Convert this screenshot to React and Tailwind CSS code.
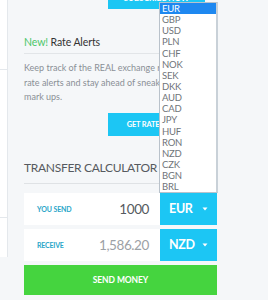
import React from 'react';

const currencies = ['EUR', 'GBP', 'USD', 'PLN', 'CHF', 'NOK', 'SEK', 'DKK', 'AUD', 'CAD', 'JPY', 'HUF', 'RON', 'NZD', 'CZK', 'BGN', 'BRL'];

function Caret() {
    return (
        <svg width="6" height="4" viewBox="0 0 6 4" className="ml-auto">
            <path d="M0.5 0.5 L5.5 0.5 L3 3.5 Z" fill="#ffffff" />
        </svg>
    );
}

function App() {
    return (
        <div className="relative w-[268px] h-[300px] overflow-hidden bg-[#f5f7f9] flex font-['Lato','Noto_Sans',sans-serif]">
            {/* colonna sinistra */}
            <div className="w-[8px] h-[257px] bg-white border-r border-[#e4e8ec] flex flex-col shrink-0">
                <div className="h-[70px] border-b border-[#e4e8ec]"></div>
                <div className="h-[148px] border-b border-[#e4e8ec]"></div>
            </div>

            <div className="flex-1 pl-[16px] flex flex-col">
                {/* bottone in alto, tagliato */}
                <div className="ml-[84px] w-[97px] h-[9px] bg-[#1cc6f4] overflow-hidden flex items-end justify-center">
                    <span className="text-[8px] font-bold text-white leading-none -translate-y-[7px]">SUBSCRIBE NOW</span>
                </div>

                <div className="w-[193px]">
                    <h3 className="mt-[26px] text-[10.5px] leading-[14px] text-[#333] tracking-[-0.1px]">
                        <span className="text-[#4cc76a]">New!</span> Rate Alerts
                    </h3>
                    <div className="mt-[4px] h-px bg-[#e2e5e8]"></div>
                    <p className="mt-[7px] text-[9px] leading-[14.5px] text-[#8a8f96] whitespace-nowrap">
                        Keep track of the REAL exchange rate with<br />
                        rate alerts and stay ahead of sneaky<br />
                        mark ups.
                    </p>
                    <button className="mt-[8.5px] ml-[84px] w-[97px] h-[23px] bg-[#1cc6f4] text-white text-[7.5px] font-bold tracking-[-0.2px] flex items-center justify-center">
                        GET RATE ALERTS
                    </button>

                    <h2 className="mt-[24px] text-[12px] leading-[16px] text-[#555a60] tracking-[-0.3px]">TRANSFER CALCULATOR</h2>
                    <div className="mt-[7px] h-px bg-[#dfe2e5]"></div>

                    {/* calcolatore */}
                    <div className="mt-[9px] flex flex-col gap-[4px]">
                        <div className="flex h-[32px]">
                            <div className="flex-1 bg-white flex items-center pl-[13px] pr-[11px]">
                                <span className="text-[7px] font-bold text-[#2ba6c9] tracking-[-0.1px]">YOU SEND</span>
                                <span className="ml-auto text-[13.5px] text-[#555a60] tracking-[-0.4px]">1000</span>
                            </div>
                            <div className="w-[57px] bg-[#1cc6f4] flex items-center pl-[9px] pr-[9px]">
                                <span className="text-[12.5px] font-bold text-white tracking-[-0.3px]">EUR</span>
                                <Caret />
                            </div>
                        </div>
                        <div className="flex h-[32px]">
                            <div className="flex-1 bg-white flex items-center pl-[13px] pr-[11px]">
                                <span className="text-[7px] font-bold text-[#2ba6c9] tracking-[-0.2px]">RECEIVE</span>
                                <span className="ml-auto text-[13.5px] text-[#9ca1a6] tracking-[-0.4px]">1,586.20</span>
                            </div>
                            <div className="w-[57px] bg-[#1cc6f4] flex items-center pl-[9px] pr-[9px]">
                                <span className="text-[12.5px] font-bold text-white tracking-[-0.3px]">NZD</span>
                                <Caret />
                            </div>
                        </div>
                        <button className="h-[30px] bg-[#45d43f] text-white text-[8.5px] font-bold tracking-[-0.1px]">SEND MONEY</button>
                    </div>
                </div>
            </div>

            {/* menu a tendina aperto */}
            <div className="absolute left-[159px] top-[2px] w-[59px] h-[191px] bg-white border border-[#b9c2cb] border-r-2 border-r-[#c9d1d8] flex flex-col">
                {currencies.map((c, i) => (
                    <div
                        key={c}
                        className={`h-[11.15px] leading-[11.15px] pl-[2px] text-[9.5px] tracking-[-0.2px] ${i === 0 ? 'bg-[#1e88f0] text-white' : 'text-[#6f7479]'}`}
                    >
                        {c}
                    </div>
                ))}
            </div>
        </div>
    );
}

export default App;
